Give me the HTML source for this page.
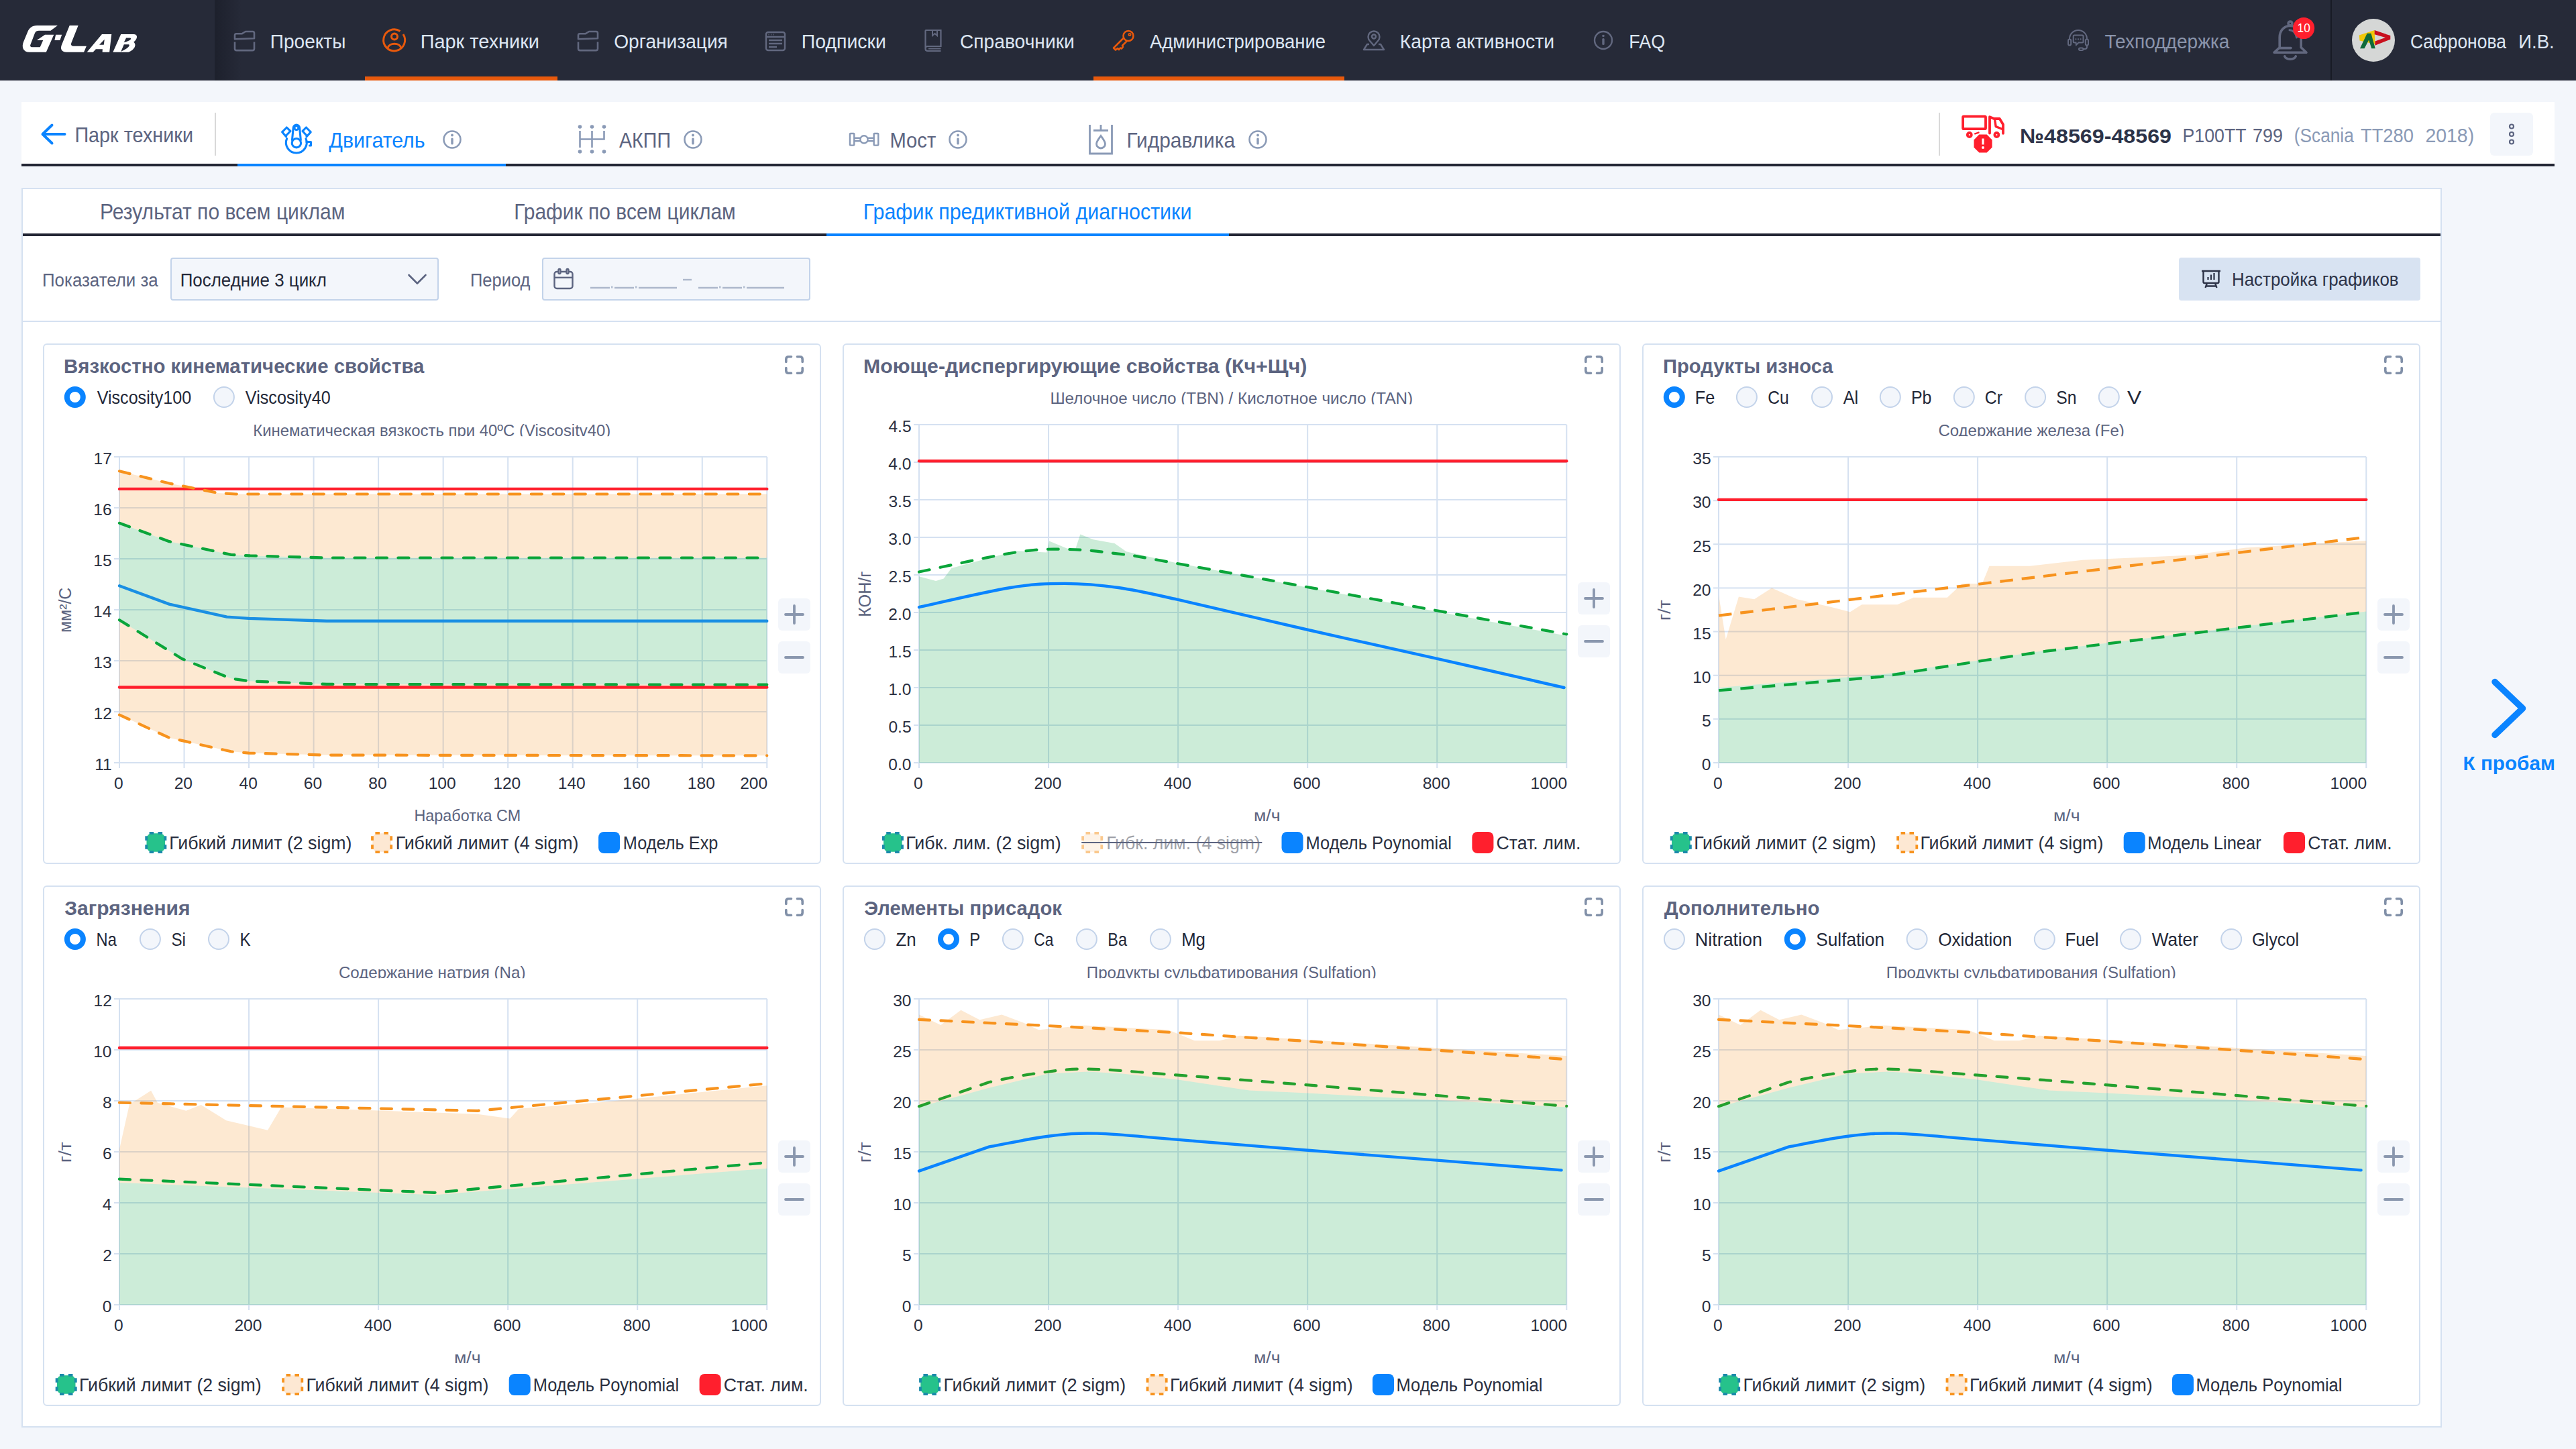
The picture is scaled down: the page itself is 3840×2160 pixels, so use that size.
<!DOCTYPE html>
<html><head><meta charset="utf-8"><title>G-LAB</title>
<style>
html,body{margin:0;padding:0;}
html{overflow:hidden;}
@media (max-width:1921px){body{transform:scale(0.5);transform-origin:0 0;}}
@media (min-width:1922px) and (max-width:2561px){body{transform:scale(0.666667);transform-origin:0 0;}}
@media (max-width:1281px){body{transform:scale(0.333333);transform-origin:0 0;}}
body{width:3840px;height:2160px;background:#f3f6fb;position:relative;overflow:hidden;font-family:"Liberation Sans",sans-serif;}
.b{position:absolute;}
svg.ov{position:absolute;left:0;top:0;}
</style></head><body>
<div class="b" style="left:0px;top:0px;width:3840px;height:120px;background:#262a38;"></div><div class="b" style="left:320px;top:0px;width:40px;height:120px;background:linear-gradient(to right,rgba(10,12,20,0.32),rgba(10,12,20,0));"></div><div class="b" style="left:544px;top:114px;width:287px;height:6px;background:#e8590c;"></div><div class="b" style="left:1630px;top:114px;width:374px;height:6px;background:#e8590c;"></div><div class="b" style="left:3474px;top:0px;width:2px;height:120px;background:#181b25;"></div><div class="b" style="left:32px;top:152px;width:3776px;height:92px;background:#ffffff;"></div><div class="b" style="left:32px;top:244px;width:3776px;height:4px;background:#232634;"></div><div class="b" style="left:354px;top:244px;width:400px;height:4px;background:#0a84ff;"></div><div class="b" style="left:320px;top:168px;width:2px;height:64px;background:#d9d9d9;"></div><div class="b" style="left:2890px;top:168px;width:2px;height:64px;background:#d9d9d9;"></div><div class="b" style="left:3712px;top:168px;width:64px;height:64px;background:#f3f6fb;border-radius:6px;"></div><div class="b" style="left:32px;top:280px;width:3608px;height:1848px;background:#ffffff;border:2px solid #d5e1f1;box-sizing:border-box;"></div><div class="b" style="left:34px;top:348px;width:3604px;height:4px;background:#232634;"></div><div class="b" style="left:1232px;top:348px;width:600px;height:4px;background:#0a84ff;"></div><div class="b" style="left:34px;top:478px;width:3604px;height:2px;background:#d5e1f1;"></div><div class="b" style="left:254px;top:384px;width:400px;height:64px;background:#f3f6fb;border:2px solid #c3d3ea;box-sizing:border-box;border-radius:4px;"></div><div class="b" style="left:808px;top:384px;width:400px;height:64px;background:#f3f6fb;border:2px solid #c3d3ea;box-sizing:border-box;border-radius:4px;"></div><div class="b" style="left:3248px;top:384px;width:360px;height:64px;background:#d8e3f2;border-radius:4px;"></div><div class="b" style="left:64px;top:512px;width:1160px;height:776px;background:#ffffff;border:2px solid #d5e1f1;box-sizing:border-box;border-radius:6px;"></div><div class="b" style="left:1160px;top:892px;width:48px;height:48px;background:#f3f6fb;border-radius:6px;"></div><div class="b" style="left:1160px;top:956px;width:48px;height:48px;background:#f3f6fb;border-radius:6px;"></div><div class="b" style="left:1256px;top:512px;width:1160px;height:776px;background:#ffffff;border:2px solid #d5e1f1;box-sizing:border-box;border-radius:6px;"></div><div class="b" style="left:2352px;top:868px;width:48px;height:48px;background:#f3f6fb;border-radius:6px;"></div><div class="b" style="left:2352px;top:932px;width:48px;height:48px;background:#f3f6fb;border-radius:6px;"></div><div class="b" style="left:2448px;top:512px;width:1160px;height:776px;background:#ffffff;border:2px solid #d5e1f1;box-sizing:border-box;border-radius:6px;"></div><div class="b" style="left:3544px;top:892px;width:48px;height:48px;background:#f3f6fb;border-radius:6px;"></div><div class="b" style="left:3544px;top:956px;width:48px;height:48px;background:#f3f6fb;border-radius:6px;"></div><div class="b" style="left:64px;top:1320px;width:1160px;height:776px;background:#ffffff;border:2px solid #d5e1f1;box-sizing:border-box;border-radius:6px;"></div><div class="b" style="left:1160px;top:1700px;width:48px;height:48px;background:#f3f6fb;border-radius:6px;"></div><div class="b" style="left:1160px;top:1764px;width:48px;height:48px;background:#f3f6fb;border-radius:6px;"></div><div class="b" style="left:1256px;top:1320px;width:1160px;height:776px;background:#ffffff;border:2px solid #d5e1f1;box-sizing:border-box;border-radius:6px;"></div><div class="b" style="left:2352px;top:1700px;width:48px;height:48px;background:#f3f6fb;border-radius:6px;"></div><div class="b" style="left:2352px;top:1764px;width:48px;height:48px;background:#f3f6fb;border-radius:6px;"></div><div class="b" style="left:2448px;top:1320px;width:1160px;height:776px;background:#ffffff;border:2px solid #d5e1f1;box-sizing:border-box;border-radius:6px;"></div><div class="b" style="left:3544px;top:1700px;width:48px;height:48px;background:#f3f6fb;border-radius:6px;"></div><div class="b" style="left:3544px;top:1764px;width:48px;height:48px;background:#f3f6fb;border-radius:6px;"></div>
<svg class="ov" width="3840" height="2160" viewBox="0 0 3840 2160" font-family="Liberation Sans, sans-serif">
<g fill="#ffffff"><path d="M85.90,38.04 L55.16,38.04 C47.47,38.04 43.63,42.23 41.53,46.77 L34.89,62.84 C32.10,69.83 34.19,77.87 43.98,77.87 L68.78,77.87 L80.31,51.66 L67.04,51.66 L54.81,60.05 L64.24,60.05 L59.70,70.18 L47.47,70.18 C45.02,70.18 44.68,68.09 45.51,66.34 L52.01,49.22 C53.41,46.42 55.16,45.72 57.95,45.72 L75.42,45.72 Z"/><path d="M83.11,51.66 L92.19,51.66 L89.40,60.05 L81.36,60.05 Z"/><path d="M103.72,38.04 L116.65,38.04 L106.52,63.54 C105.12,67.04 106.52,68.78 110.36,68.78 L128.88,68.78 L125.04,77.87 L99.18,77.87 C91.50,77.87 89.40,72.63 92.19,66.34 Z"/><path fill-rule="evenodd" d="M129.58,77.87 L151.94,50.96 L166.27,50.96 L163.12,77.87 L152.64,77.87 L152.85,73.33 L142.86,73.33 L138.67,77.87 Z M148.10,66.69 L155.79,58.65 L154.74,66.69 Z"/><path fill-rule="evenodd" d="M168.36,77.87 L180.24,50.96 L199.11,50.96 C206.10,50.96 205.40,57.95 199.11,62.84 C203.31,65.64 202.61,73.33 191.43,77.87 Z M184.79,63.19 L188.07,56.55 L193.52,56.55 C197.02,56.90 195.62,60.75 184.79,63.19 Z M180.24,76.96 L184.79,66.34 L191.43,66.34 C194.22,66.69 193.52,71.23 180.24,76.96 Z"/></g>
<g fill="none" stroke="#62687f" stroke-width="2.6" stroke-linejoin="round"><path d="M350 58.3 V52.5 q0-2.2 2.2-2.2 H360.5 L366 47 H376.8 q2.2 0 2.2 2.2 V57.3 Z"/><path d="M350 62.5 V72.5 q0 2.6 2.6 2.6 H376.4 q2.6 0 2.6 -2.6 V62.5"/></g>
<g fill="none" stroke="#62687f" stroke-width="2.6" stroke-linejoin="round"><path d="M862 58.3 V52.5 q0-2.2 2.2-2.2 H872.5 L878 47 H888.8 q2.2 0 2.2 2.2 V57.3 Z"/><path d="M862 62.5 V72.5 q0 2.6 2.6 2.6 H888.4 q2.6 0 2.6 -2.6 V62.5"/></g>
<g fill="none" stroke="#e8590c" stroke-width="3"><path d="M596.5 46.5 A16 16 0 1 0 601 51"/><circle cx="588" cy="54.5" r="4.5"/><path d="M578 71.5 C580 63 596 63 598 71.5"/></g>
<g fill="none" stroke="#62687f" stroke-width="2.4"><rect x="1142" y="48" width="28" height="27" rx="3"/><path d="M1142 55 H1170 M1146 60 H1166 M1146 65 H1166 M1146 70 H1158"/><path d="M1145.5 51.5 h1 M1149 51.5 h1 M1152.5 51.5 h1" stroke-width="1.8"/></g>
<g fill="none" stroke="#62687f" stroke-width="2.4"><path d="M1379.5 72.5 V46 q0-1 1-1 H1402.5 V69 H1383 q-3.5 0 -3.5 3.5 q0 3.5 3.5 3.5 H1402.5 M1384 72.5 H1402.5" stroke-width="2.2"/><path d="M1390 45 V53 L1393.5 50 L1397 53 V45" stroke-width="2"/></g>
<g fill="none" stroke="#e8590c" stroke-width="2.6" stroke-linejoin="round"><path d="M1675.5 56 L1660 71.5 L1663 74.5 L1666 72 L1668 74 L1670 71.5 L1672 72.5 L1674 70 L1673 68 L1680 61"/><circle cx="1682" cy="53.5" r="7.5"/><circle cx="1684" cy="51.5" r="1.6" stroke-width="1.8"/></g>
<g fill="none" stroke="#62687f" stroke-width="2.4" stroke-linejoin="round"><path d="M2048 68 L2042 61 A8.5 8.5 0 1 1 2054 61 Z"/><circle cx="2048" cy="54.5" r="3"/><path d="M2041 66 H2038 L2033 74 H2063 L2058 66 H2055"/></g>
<g fill="none" stroke="#62687f" stroke-width="2.4"><circle cx="2390" cy="60" r="13"/></g><circle cx="2390" cy="53.5" r="1.8" fill="#62687f"/><rect x="2388.3" y="57" width="3.4" height="10" rx="1.5" fill="#62687f"/>
<g fill="none" stroke="#62687f" stroke-width="2"><path d="M3085 58 A13 13 0 0 1 3111 58"/><rect x="3083" y="58.5" width="4.2" height="9" rx="2.1"/><rect x="3108.8" y="58.5" width="4.2" height="9" rx="2.1"/><path d="M3111 67.5 V70 q0 3 -3 3 H3105"/><rect x="3099" y="71.5" width="6.5" height="3.4" rx="1.7"/><path d="M3092.2 52.5 H3104 q1.5 0 1.5 1.5 V62 q0 1.5 -1.5 1.5 H3098.5 L3095 67 L3094.5 63.5 H3092.2 q-1.5 0 -1.5 -1.5 V54 q0 -1.5 1.5 -1.5 Z"/></g><g fill="#62687f"><circle cx="3094.4" cy="58.3" r="1.1"/><circle cx="3098" cy="58.3" r="1.1"/><circle cx="3101.6" cy="58.3" r="1.1"/></g>
<g fill="none" stroke="#62687f" stroke-width="3.6" stroke-linecap="round" stroke-linejoin="round"><circle cx="3414" cy="34.9" r="2.9"/><path d="M3398.2 70.8 V56 C3398.2 45.5 3405 38.5 3414 38.5 C3423 38.5 3430.2 45.5 3430.2 56 V70.8 L3438 78.3 H3390 Z"/><path d="M3398.5 71.6 H3415"/><path d="M3413 44.8 C3418 45 3422 49 3423.6 55.9" stroke-width="3"/><path d="M3405.7 83.8 C3408 89.5 3420 89.5 3422.3 83.8"/></g><circle cx="3434.1" cy="42" r="16.1" fill="#ff1f2d"/>
<text x="3424.50" y="47.90" font-size="18.8" fill="#ffffff" textLength="19.35" lengthAdjust="spacingAndGlyphs">10</text>
<circle cx="3538" cy="60" r="32" fill="#d5d7d6"/><path d="M3516.8 52.5 L3539.7 45.1 L3540.4 66 L3517.5 60.4 Z" fill="#f0c808"/><path d="M3518 72.3 L3528.6 49.8 L3534.5 49.8 L3540.8 72.3 L3535.2 72.3 L3531.2 59.4 L3524.6 72.3 Z" fill="#0f6b3a"/><path d="M3539.7 45.1 L3563.3 53.1 L3563.3 58.7 L3540.4 67.8 L3540.4 61.6 L3555.9 56 L3539.7 51.3 Z" fill="#c8101e"/>
<text x="402.75" y="72.00" font-size="30" fill="#dde6f3" textLength="112.65" lengthAdjust="spacingAndGlyphs">Проекты</text>
<text x="626.69" y="72.00" font-size="30" fill="#dde6f3" textLength="177.32" lengthAdjust="spacingAndGlyphs">Парк техники</text>
<text x="915.23" y="72.00" font-size="30" fill="#dde6f3" textLength="169.63" lengthAdjust="spacingAndGlyphs">Организация</text>
<text x="1194.72" y="72.00" font-size="30" fill="#dde6f3" textLength="126.20" lengthAdjust="spacingAndGlyphs">Подписки</text>
<text x="1430.99" y="72.00" font-size="30" fill="#dde6f3" textLength="170.73" lengthAdjust="spacingAndGlyphs">Справочники</text>
<text x="1714.00" y="72.00" font-size="30" fill="#dde6f3" textLength="262.06" lengthAdjust="spacingAndGlyphs">Администрирование</text>
<text x="2086.73" y="72.00" font-size="30" fill="#dde6f3" textLength="230.35" lengthAdjust="spacingAndGlyphs">Карта активности</text>
<text x="2428.25" y="72.00" font-size="30" fill="#dde6f3" textLength="53.88" lengthAdjust="spacingAndGlyphs">FAQ</text>
<text x="3137.44" y="72.00" font-size="30" fill="#8a94ab" textLength="185.96" lengthAdjust="spacingAndGlyphs">Техподдержка</text>
<text x="3592.88" y="72.00" font-size="30" fill="#dde6f3" textLength="143.00" lengthAdjust="spacingAndGlyphs">Сафронова</text>
<text x="3754.30" y="72.00" font-size="30" fill="#dde6f3" textLength="53.42" lengthAdjust="spacingAndGlyphs">И.В.</text>
<g fill="none" stroke="#5c6480" stroke-width="2.2"><circle cx="3744" cy="188.5" r="3"/><circle cx="3744" cy="200" r="3"/><circle cx="3744" cy="211.5" r="3"/></g>
<path d="M96.5 200 H64.5 M77.5 186.5 L63.5 200 L77.5 213.5" fill="none" stroke="#0a84ff" stroke-width="4" stroke-linecap="round" stroke-linejoin="round"/>
<text x="111.40" y="212.30" font-size="30.5" fill="#5c6480" textLength="176.60" lengthAdjust="spacingAndGlyphs">Парк техники</text>
<g fill="none" stroke="#0a84ff" stroke-width="3.1" stroke-linejoin="round" stroke-linecap="round"><path d="M427.61 206.58 A15.4 15.4 0 1 0 455.98 206.58"/><path d="M426.57 203.68 L420.56 196.85 L427.40 190.01 L432.99 195.40 L426.57 202.03"/><path d="M457.02 203.68 L463.23 196.85 L456.40 190.01 L451.01 195.40 L457.02 202.03"/><path d="M437.22 190.43 A4.7 4.7 0 0 1 446.58 190.43 M437.22 190.43 L435.48 208.65 M446.58 190.43 L448.32 208.65"/><circle cx="441.90" cy="213.21" r="6.7"/><circle cx="441.90" cy="190.63" r="3.0"/><path d="M456.81 211.55 L463.44 211.55 L463.44 216.94 L461.57 216.94"/></g>
<text x="490.35" y="220.30" font-size="32" fill="#0a84ff" textLength="143.27" lengthAdjust="spacingAndGlyphs">Двигатель</text>
<circle cx="674" cy="208" r="12.5" fill="none" stroke="#8a9ab6" stroke-width="2.5"/><circle cx="674" cy="201.5" r="1.9" fill="#8a9ab6"/><rect x="672.3" y="205.5" width="3.4" height="10" rx="1.6" fill="#8a9ab6"/>
<g fill="#8a9ab6"><circle cx="864.5" cy="189" r="2.8"/><circle cx="882.5" cy="189" r="2.8"/><circle cx="900.5" cy="189" r="2.8"/><circle cx="864.5" cy="226" r="2.8"/><circle cx="882.5" cy="226" r="2.8"/><circle cx="900.5" cy="226" r="2.8"/></g><path d="M864.5 195 V220 M882.5 195 V220 M900.5 195 V207.5 H864.5" fill="none" stroke="#8a9ab6" stroke-width="2.6"/>
<text x="923.00" y="220.30" font-size="32" fill="#5c6480" textLength="77.01" lengthAdjust="spacingAndGlyphs">АКПП</text>
<circle cx="1033" cy="208" r="12.5" fill="none" stroke="#8a9ab6" stroke-width="2.5"/><circle cx="1033" cy="201.5" r="1.9" fill="#8a9ab6"/><rect x="1031.3" y="205.5" width="3.4" height="10" rx="1.6" fill="#8a9ab6"/>
<g fill="none" stroke="#8a9ab6" stroke-width="2.4" stroke-linejoin="round"><rect x="1267" y="199" width="6.3" height="17.6" rx="0.8"/><rect x="1302.7" y="199" width="6.6" height="17.6" rx="0.8"/><circle cx="1288" cy="207.9" r="5.6"/><path d="M1273.3 205.7 H1282.6 M1273.3 210.3 H1282.6 M1293.4 205.7 H1302.7 M1293.4 210.3 H1302.7"/></g>
<text x="1326.46" y="220.30" font-size="32" fill="#5c6480" textLength="68.88" lengthAdjust="spacingAndGlyphs">Мост</text>
<circle cx="1428" cy="208" r="12.5" fill="none" stroke="#8a9ab6" stroke-width="2.5"/><circle cx="1428" cy="201.5" r="1.9" fill="#8a9ab6"/><rect x="1426.3" y="205.5" width="3.4" height="10" rx="1.6" fill="#8a9ab6"/>
<g fill="none" stroke="#8a9ab6" stroke-width="2.8"><path d="M1624.5 186 V229 H1657.5 V186"/><path d="M1630 194.5 H1652 M1641 186 V194.5"/><path d="M1641 202.5 C1637 208 1634.5 211 1634.5 214.5 A6.5 6.5 0 0 0 1647.5 214.5 C1647.5 211 1645 208 1641 202.5 Z"/></g>
<text x="1679.61" y="220.30" font-size="32" fill="#5c6480" textLength="161.41" lengthAdjust="spacingAndGlyphs">Гидравлика</text>
<circle cx="1875" cy="208" r="12.5" fill="none" stroke="#8a9ab6" stroke-width="2.5"/><circle cx="1875" cy="201.5" r="1.9" fill="#8a9ab6"/><rect x="1873.3" y="205.5" width="3.4" height="10" rx="1.6" fill="#8a9ab6"/>
<g fill="none" stroke="#ff1f2d" stroke-width="3.8" stroke-linejoin="round" stroke-linecap="round"><rect x="2926.1" y="173.7" width="33.9" height="18.4" rx="1.2"/><path d="M2966 198.5 V174.2 L2972.5 177 H2980.8 L2986 185.5 V198.8"/><path d="M2973.8 179.8 L2975.2 188.7 L2984.8 192.5" stroke-width="3.4"/><circle cx="2935.8" cy="201" r="3"/><circle cx="2976.4" cy="201" r="3"/><path d="M2944.2 199.3 L2949.5 197.6" stroke-width="2.4"/></g><path d="M2950.3 200.5 H2961.7 L2969.6 208.4 V219.7 L2961.7 227.6 H2950.3 L2942.5 219.7 V208.4 Z" fill="#ff1f2d"/><rect x="2954.4" y="206.5" width="3.2" height="9" fill="#fff"/><circle cx="2956" cy="220.1" r="2" fill="#fff"/>
<text x="3011.11" y="212.50" font-size="30" font-weight="bold" fill="#2d3348" textLength="225.91" lengthAdjust="spacingAndGlyphs">№48569-48569</text>
<text x="3253.56" y="212.30" font-size="30" fill="#5c6480" textLength="95.03" lengthAdjust="spacingAndGlyphs">Р100ТТ</text>
<text x="3357.95" y="212.30" font-size="30" fill="#5c6480" textLength="44.95" lengthAdjust="spacingAndGlyphs">799</text>
<text x="3419.72" y="212.30" font-size="30" fill="#8a9ab6" textLength="89.10" lengthAdjust="spacingAndGlyphs">(Scania</text>
<text x="3518.95" y="212.30" font-size="30" fill="#8a9ab6" textLength="79.11" lengthAdjust="spacingAndGlyphs">TT280</text>
<text x="3615.38" y="212.30" font-size="30" fill="#8a9ab6" textLength="72.81" lengthAdjust="spacingAndGlyphs">2018)</text>
<text x="148.99" y="326.60" font-size="32.5" fill="#5c6480" textLength="365.36" lengthAdjust="spacingAndGlyphs">Результат по всем циклам</text>
<text x="766.20" y="326.60" font-size="32.5" fill="#5c6480" textLength="330.56" lengthAdjust="spacingAndGlyphs">График по всем циклам</text>
<text x="1286.77" y="326.60" font-size="32.5" fill="#0a84ff" textLength="489.63" lengthAdjust="spacingAndGlyphs">График предиктивной диагностики</text>
<text x="63.03" y="426.60" font-size="27.7" fill="#5c6480" textLength="172.71" lengthAdjust="spacingAndGlyphs">Показатели за</text>
<text x="268.73" y="426.60" font-size="27.7" fill="#232838" textLength="218.15" lengthAdjust="spacingAndGlyphs">Последние 3 цикл</text>
<path d="M609.5 410 L622 422.5 L634.5 410" fill="none" stroke="#5c6480" stroke-width="2.6" stroke-linejoin="round" stroke-linecap="round"/>
<text x="700.96" y="426.60" font-size="27.7" fill="#5c6480" textLength="89.49" lengthAdjust="spacingAndGlyphs">Период</text>
<g fill="none" stroke="#5c6480" stroke-width="2.4"><rect x="826.5" y="405" width="27" height="25" rx="3.5"/><path d="M826.5 413.8 H853.5"/><rect x="832.5" y="401" width="3" height="7" rx="1.5" fill="#f3f6fb"/><rect x="844.5" y="401" width="3" height="7" rx="1.5" fill="#f3f6fb"/></g>
<g fill="none" stroke="#adb8cb" stroke-width="2.4"><path d="M880 429 H909 M916 429 H945 M952 429 H1009 M1041 429 H1070 M1077 429 H1106 M1113 429 H1169"/><path d="M1018 417 H1031"/></g><g fill="#b4bfd2"><rect x="911" y="426.5" width="2.5" height="3"/><rect x="947" y="426.5" width="2.5" height="3"/><rect x="1072" y="426.5" width="2.5" height="3"/><rect x="1108" y="426.5" width="2.5" height="3"/></g>
<g fill="none" stroke="#2d3348" stroke-width="2.4"><path d="M3282 404 H3310 M3284.5 404 V420 q0 2 2 2 H3305.5 q2 0 2 -2 V404 M3290 422 L3287.5 429 M3302 422 L3304.5 429 M3288.5 426.5 H3303.5"/><path d="M3291.5 417 V413 M3296 417 V409.5 M3300.5 417 V407" stroke-width="2.2"/></g>
<text x="3326.93" y="426.40" font-size="28.5" fill="#2d3348" textLength="248.72" lengthAdjust="spacingAndGlyphs">Настройка графиков</text>
<path d="M3719 1016.5 L3760.5 1056 L3719 1095.5" fill="none" stroke="#0a84ff" stroke-width="9.5" stroke-linecap="round" stroke-linejoin="round"/>
<text x="3671.57" y="1148.00" font-size="29.5" font-weight="bold" fill="#0a84ff" textLength="137.33" lengthAdjust="spacingAndGlyphs">К пробам</text>
<text x="95.09" y="556.10" font-size="28.7" font-weight="bold" fill="#5c6480" textLength="537.37" lengthAdjust="spacingAndGlyphs">Вязкостно кинематические свойства</text>
<g transform="translate(1170,530)" fill="none" stroke="#8190a8" stroke-width="3.6" stroke-linecap="round"><path d="M1.8 9.5 V5.5 Q1.8 1.8 5.5 1.8 H9.5 M18.5 1.8 H22.5 Q26.2 1.8 26.2 5.5 V9.5 M1.8 18.5 V22.5 Q1.8 26.2 5.5 26.2 H9.5 M18.5 26.2 H22.5 Q26.2 26.2 26.2 22.5 V18.5"/></g>
<circle cx="111.8" cy="592" r="12" fill="#fff" stroke="#0a84ff" stroke-width="8"/>
<text x="144.67" y="602.10" font-size="27.7" fill="#232838" textLength="140.53" lengthAdjust="spacingAndGlyphs">Viscosity100</text>
<circle cx="333.9" cy="592" r="15" fill="#f3f6fb" stroke="#c3d3ea" stroke-width="2"/>
<text x="365.87" y="602.10" font-size="27.7" fill="#232838" textLength="126.80" lengthAdjust="spacingAndGlyphs">Viscosity40</text>
<clipPath id="ct1"><rect x="64" y="623" width="1160" height="27.3"/></clipPath>
<g clip-path="url(#ct1)">
<text x="377.29" y="649.90" font-size="24.4" fill="#5c6480" textLength="533.05" lengthAdjust="spacingAndGlyphs">Кинематическая вязкость при 40ºС (Viscositv40)</text>
</g>
<path d="M170 1137.00 H1143.30 M170 1061.00 H1143.30 M170 985.00 H1143.30 M170 909.00 H1143.30 M170 833.00 H1143.30 M170 757.00 H1143.30 M170 681.00 H1143.30 M178.00 681 V1145 M274.53 681 V1145 M371.06 681 V1145 M467.59 681 V1145 M564.12 681 V1145 M660.65 681 V1145 M757.18 681 V1145 M853.71 681 V1145 M950.24 681 V1145 M1046.77 681 V1145 M1143.30 681 V1145" stroke="#d5e1f1" stroke-width="2" fill="none"/>
<text x="141.25" y="1148.30" font-size="24.6" fill="#2a2f40" textLength="25.54" lengthAdjust="spacingAndGlyphs">11</text>
<text x="139.52" y="1072.30" font-size="24.6" fill="#2a2f40" textLength="27.36" lengthAdjust="spacingAndGlyphs">12</text>
<text x="139.28" y="996.30" font-size="24.6" fill="#2a2f40" textLength="27.36" lengthAdjust="spacingAndGlyphs">13</text>
<text x="139.03" y="920.30" font-size="24.6" fill="#2a2f40" textLength="27.36" lengthAdjust="spacingAndGlyphs">14</text>
<text x="139.28" y="844.30" font-size="24.6" fill="#2a2f40" textLength="27.36" lengthAdjust="spacingAndGlyphs">15</text>
<text x="139.28" y="768.30" font-size="24.6" fill="#2a2f40" textLength="27.36" lengthAdjust="spacingAndGlyphs">16</text>
<text x="139.52" y="692.30" font-size="24.6" fill="#2a2f40" textLength="27.36" lengthAdjust="spacingAndGlyphs">17</text>
<text x="170.11" y="1176.30" font-size="24.6" fill="#2a2f40" textLength="13.68" lengthAdjust="spacingAndGlyphs">0</text>
<text x="259.69" y="1176.30" font-size="24.6" fill="#2a2f40" textLength="27.36" lengthAdjust="spacingAndGlyphs">20</text>
<text x="356.59" y="1176.30" font-size="24.6" fill="#2a2f40" textLength="27.36" lengthAdjust="spacingAndGlyphs">40</text>
<text x="452.75" y="1176.30" font-size="24.6" fill="#2a2f40" textLength="27.36" lengthAdjust="spacingAndGlyphs">60</text>
<text x="549.34" y="1176.30" font-size="24.6" fill="#2a2f40" textLength="27.36" lengthAdjust="spacingAndGlyphs">80</text>
<text x="638.68" y="1176.30" font-size="24.6" fill="#2a2f40" textLength="41.05" lengthAdjust="spacingAndGlyphs">100</text>
<text x="735.21" y="1176.30" font-size="24.6" fill="#2a2f40" textLength="41.05" lengthAdjust="spacingAndGlyphs">120</text>
<text x="831.74" y="1176.30" font-size="24.6" fill="#2a2f40" textLength="41.05" lengthAdjust="spacingAndGlyphs">140</text>
<text x="928.27" y="1176.30" font-size="24.6" fill="#2a2f40" textLength="41.05" lengthAdjust="spacingAndGlyphs">160</text>
<text x="1024.80" y="1176.30" font-size="24.6" fill="#2a2f40" textLength="41.05" lengthAdjust="spacingAndGlyphs">180</text>
<text x="1103.20" y="1176.30" font-size="24.6" fill="#2a2f40" textLength="41.05" lengthAdjust="spacingAndGlyphs">200</text>
<text x="617.48" y="1224.20" font-size="24.4" fill="#5c6480" textLength="158.71" lengthAdjust="spacingAndGlyphs">Наработка СМ</text>
<g transform="translate(106,909.00) rotate(-90)">
<text x="-34.09" y="0.00" font-size="25.5" fill="#5c6480" textLength="67.39" lengthAdjust="spacingAndGlyphs">мм²/С</text>
</g>
<path d="M1171 916.00 H1197 M1184 903.00 V929.00 M1171 980.00 H1197" stroke="#8a97ae" stroke-width="3.8" stroke-linecap="round" fill="none"/>
<rect x="218.5" y="1242.2" width="27.6" height="27.6" rx="8" fill="#26c28b"/><g fill="#1a8aaa"><rect x="222.6" y="1240.0" width="6.6" height="3.8"/><rect x="222.6" y="1268.2" width="6.6" height="3.8"/><rect x="216.3" y="1246.3" width="3.8" height="6.6"/><rect x="244.5" y="1246.3" width="3.8" height="6.6"/><rect x="235.5" y="1240.0" width="6.6" height="3.8"/><rect x="235.5" y="1268.2" width="6.6" height="3.8"/><rect x="216.3" y="1259.2" width="3.8" height="6.6"/><rect x="244.5" y="1259.2" width="3.8" height="6.6"/></g>
<text x="252.26" y="1265.70" font-size="27" fill="#2a2f40" textLength="272.17" lengthAdjust="spacingAndGlyphs">Гибкий лимит (2 sigm)</text>
<g><rect x="555.3000000000001" y="1242.2" width="27.6" height="27.6" rx="8" fill="#fde8d3"/><g fill="#f7931e"><rect x="559.4" y="1240.0" width="6.6" height="3.8"/><rect x="559.4" y="1268.2" width="6.6" height="3.8"/><rect x="553.1" y="1246.3" width="3.8" height="6.6"/><rect x="581.3" y="1246.3" width="3.8" height="6.6"/><rect x="572.3" y="1240.0" width="6.6" height="3.8"/><rect x="572.3" y="1268.2" width="6.6" height="3.8"/><rect x="553.1" y="1259.2" width="3.8" height="6.6"/><rect x="581.3" y="1259.2" width="3.8" height="6.6"/></g></g>
<text x="589.66" y="1265.70" font-size="27" fill="#2a2f40" textLength="272.78" lengthAdjust="spacingAndGlyphs">Гибкий лимит (4 sigm)</text>
<rect x="892.1" y="1240" width="32" height="32" rx="8" fill="#0a84ff"/>
<text x="928.77" y="1265.70" font-size="27" fill="#2a2f40" textLength="141.65" lengthAdjust="spacingAndGlyphs">Модель Exp</text>
<path d="M178.00 702.28 L252.33 720.52 L325.21 734.96 L351.75 736.48 L1143.30 736.48 L1143.30 831.48 L486.90 831.48 L372.99 828.44 L344.51 826.92 L252.33 807.16 L178.00 779.80 Z" fill="#f7931e" fill-opacity="0.2"/>
<path d="M178.00 924.20 L271.15 981.96 L344.51 1011.60 L372.99 1015.40 L486.90 1019.96 L1143.30 1020.72 L1143.30 1126.36 L486.90 1125.60 L371.06 1122.56 L344.51 1120.28 L252.33 1099.76 L178.00 1065.56 Z" fill="#f7931e" fill-opacity="0.2"/>
<path d="M178.00 779.80 L252.33 807.16 L344.51 826.92 L372.99 828.44 L486.90 831.48 L1143.30 831.48 L1143.30 1020.72 L486.90 1019.96 L372.99 1015.40 L344.51 1011.60 L271.15 981.96 L178.00 924.20 Z" fill="#00a03c" fill-opacity="0.2"/>
<path d="M178.00 728.88 L1143.30 728.88" fill="none" stroke="#ff1f2d" stroke-width="4.4" stroke-linecap="round" stroke-linejoin="round"/>
<path d="M178.00 1024.52 L1143.30 1024.52" fill="none" stroke="#ff1f2d" stroke-width="4.4" stroke-linecap="round" stroke-linejoin="round"/>
<path d="M178.00 702.28 L252.33 720.52 L325.21 734.96 L351.75 736.48 L1143.30 736.48" fill="none" stroke="#f7931e" stroke-width="4.2" stroke-linecap="round" stroke-linejoin="round" stroke-dasharray="16 16.5"/>
<path d="M178.00 779.80 L252.33 807.16 L344.51 826.92 L372.99 828.44 L486.90 831.48 L1143.30 831.48" fill="none" stroke="#0aa53a" stroke-width="4.2" stroke-linecap="round" stroke-linejoin="round" stroke-dasharray="16 16.5"/>
<path d="M178.00 924.20 L271.15 981.96 L344.51 1011.60 L372.99 1015.40 L486.90 1019.96 L1143.30 1020.72" fill="none" stroke="#0aa53a" stroke-width="4.2" stroke-linecap="round" stroke-linejoin="round" stroke-dasharray="16 16.5"/>
<path d="M178.00 1065.56 L252.33 1099.76 L344.51 1120.28 L371.06 1122.56 L486.90 1125.60 L1143.30 1126.36" fill="none" stroke="#f7931e" stroke-width="4.2" stroke-linecap="round" stroke-linejoin="round" stroke-dasharray="16 16.5"/>
<path d="M178.00 873.28 L252.33 900.64 L338.24 919.64 L371.06 921.92 L486.90 925.72 L1143.30 925.72" fill="none" stroke="#1a8fe3" stroke-width="4.4" stroke-linecap="round" stroke-linejoin="round"/>
<text x="1287.03" y="556.10" font-size="28.7" font-weight="bold" fill="#5c6480" textLength="661.27" lengthAdjust="spacingAndGlyphs">Моюще-диспергирующие свойства (Кч+Щч)</text>
<g transform="translate(2362,530)" fill="none" stroke="#8190a8" stroke-width="3.6" stroke-linecap="round"><path d="M1.8 9.5 V5.5 Q1.8 1.8 5.5 1.8 H9.5 M18.5 1.8 H22.5 Q26.2 1.8 26.2 5.5 V9.5 M1.8 18.5 V22.5 Q1.8 26.2 5.5 26.2 H9.5 M18.5 26.2 H22.5 Q26.2 26.2 26.2 22.5 V18.5"/></g>
<clipPath id="ct2"><rect x="1256" y="575.2" width="1160" height="27.3"/></clipPath>
<g clip-path="url(#ct2)">
<text x="1565.41" y="602.10" font-size="24.4" fill="#5c6480" textLength="540.71" lengthAdjust="spacingAndGlyphs">Шелочное число (TBN) / Кислотное число (TAN)</text>
</g>
<path d="M1362 1137.00 H2335.30 M1362 1081.00 H2335.30 M1362 1025.00 H2335.30 M1362 969.00 H2335.30 M1362 913.00 H2335.30 M1362 857.00 H2335.30 M1362 801.00 H2335.30 M1362 745.00 H2335.30 M1362 689.00 H2335.30 M1362 633.00 H2335.30 M1370.00 633 V1145 M1563.06 633 V1145 M1756.12 633 V1145 M1949.18 633 V1145 M2142.24 633 V1145 M2335.30 633 V1145" stroke="#d5e1f1" stroke-width="2" fill="none"/>
<text x="1324.27" y="1148.30" font-size="24.6" fill="#2a2f40" textLength="34.20" lengthAdjust="spacingAndGlyphs">0.0</text>
<text x="1324.39" y="1092.30" font-size="24.6" fill="#2a2f40" textLength="34.20" lengthAdjust="spacingAndGlyphs">0.5</text>
<text x="1324.27" y="1036.30" font-size="24.6" fill="#2a2f40" textLength="34.20" lengthAdjust="spacingAndGlyphs">1.0</text>
<text x="1324.39" y="980.30" font-size="24.6" fill="#2a2f40" textLength="34.20" lengthAdjust="spacingAndGlyphs">1.5</text>
<text x="1324.27" y="924.30" font-size="24.6" fill="#2a2f40" textLength="34.20" lengthAdjust="spacingAndGlyphs">2.0</text>
<text x="1324.39" y="868.30" font-size="24.6" fill="#2a2f40" textLength="34.20" lengthAdjust="spacingAndGlyphs">2.5</text>
<text x="1324.27" y="812.30" font-size="24.6" fill="#2a2f40" textLength="34.20" lengthAdjust="spacingAndGlyphs">3.0</text>
<text x="1324.39" y="756.30" font-size="24.6" fill="#2a2f40" textLength="34.20" lengthAdjust="spacingAndGlyphs">3.5</text>
<text x="1324.27" y="700.30" font-size="24.6" fill="#2a2f40" textLength="34.20" lengthAdjust="spacingAndGlyphs">4.0</text>
<text x="1324.39" y="644.30" font-size="24.6" fill="#2a2f40" textLength="34.20" lengthAdjust="spacingAndGlyphs">4.5</text>
<text x="1362.11" y="1176.30" font-size="24.6" fill="#2a2f40" textLength="13.68" lengthAdjust="spacingAndGlyphs">0</text>
<text x="1541.40" y="1176.30" font-size="24.6" fill="#2a2f40" textLength="41.05" lengthAdjust="spacingAndGlyphs">200</text>
<text x="1734.83" y="1176.30" font-size="24.6" fill="#2a2f40" textLength="41.05" lengthAdjust="spacingAndGlyphs">400</text>
<text x="1927.52" y="1176.30" font-size="24.6" fill="#2a2f40" textLength="41.05" lengthAdjust="spacingAndGlyphs">600</text>
<text x="2120.64" y="1176.30" font-size="24.6" fill="#2a2f40" textLength="41.05" lengthAdjust="spacingAndGlyphs">800</text>
<text x="2281.43" y="1176.30" font-size="24.6" fill="#2a2f40" textLength="54.73" lengthAdjust="spacingAndGlyphs">1000</text>
<text x="1868.98" y="1224.20" font-size="24.4" fill="#5c6480" textLength="39.67" lengthAdjust="spacingAndGlyphs">м/ч</text>
<g transform="translate(1298,885.00) rotate(-90)">
<text x="-34.87" y="0.00" font-size="25.5" fill="#5c6480" textLength="68.44" lengthAdjust="spacingAndGlyphs">КОН/г</text>
</g>
<path d="M2363 892.00 H2389 M2376 879.00 V905.00 M2363 956.00 H2389" stroke="#8a97ae" stroke-width="3.8" stroke-linecap="round" fill="none"/>
<rect x="1317.1000000000001" y="1242.2" width="27.6" height="27.6" rx="8" fill="#26c28b"/><g fill="#1a8aaa"><rect x="1321.2" y="1240.0" width="6.6" height="3.8"/><rect x="1321.2" y="1268.2" width="6.6" height="3.8"/><rect x="1314.9" y="1246.3" width="3.8" height="6.6"/><rect x="1343.1" y="1246.3" width="3.8" height="6.6"/><rect x="1334.1" y="1240.0" width="6.6" height="3.8"/><rect x="1334.1" y="1268.2" width="6.6" height="3.8"/><rect x="1314.9" y="1259.2" width="3.8" height="6.6"/><rect x="1343.1" y="1259.2" width="3.8" height="6.6"/></g>
<text x="1350.25" y="1265.70" font-size="27" fill="#2a2f40" textLength="231.40" lengthAdjust="spacingAndGlyphs">Гибк. лим. (2 sigm)</text>
<g opacity="0.5"><rect x="1614.4" y="1242.2" width="27.6" height="27.6" rx="8" fill="#fde8d3"/><g fill="#f7931e"><rect x="1618.5" y="1240.0" width="6.6" height="3.8"/><rect x="1618.5" y="1268.2" width="6.6" height="3.8"/><rect x="1612.2" y="1246.3" width="3.8" height="6.6"/><rect x="1640.4" y="1246.3" width="3.8" height="6.6"/><rect x="1631.4" y="1240.0" width="6.6" height="3.8"/><rect x="1631.4" y="1268.2" width="6.6" height="3.8"/><rect x="1612.2" y="1259.2" width="3.8" height="6.6"/><rect x="1640.4" y="1259.2" width="3.8" height="6.6"/></g></g>
<g opacity="0.45">
<text x="1649.16" y="1265.70" font-size="27" fill="#2a2f40" textLength="229.78" lengthAdjust="spacingAndGlyphs">Гибк. лим. (4 sigm)</text>
</g>
<path d="M1612.2 1256 H1881.3" stroke="#5c6480" stroke-width="2"/>
<rect x="1910.5" y="1240" width="32" height="32" rx="8" fill="#0a84ff"/>
<text x="1946.56" y="1265.70" font-size="27" fill="#2a2f40" textLength="217.43" lengthAdjust="spacingAndGlyphs">Модель Poynomial</text>
<rect x="2194.4" y="1240" width="32" height="32" rx="8" fill="#ff1f2d"/>
<text x="2230.56" y="1265.70" font-size="27" fill="#2a2f40" textLength="125.93" lengthAdjust="spacingAndGlyphs">Стат. лим.</text>
<path d="M1370.00 859.24 L1395.10 865.96 L1406.68 862.60 L1418.27 846.92 L1513.83 821.16 L1560.16 823.40 L1564.03 806.60 L1591.05 817.80 L1602.64 820.04 L1610.36 796.52 L1629.67 804.36 L1661.52 809.96 L1678.90 822.28 L1756.12 839.64 L2335.30 947.72 L2335.30 1137.00 L1370.00 1137.00 Z" fill="#00a03c" fill-opacity="0.2"/>
<path d="M1370.00 687.21 L2335.30 687.21" fill="none" stroke="#ff1f2d" stroke-width="4.4" stroke-linecap="round" stroke-linejoin="round"/>
<path d="M1370.00 852.52 C1393.97 847.67 1476.99 829.00 1513.83 823.40 C1550.67 817.80 1565.47 818.55 1591.05 818.92 C1616.63 819.29 1639.80 822.09 1667.31 825.64 C1694.82 829.19 1644.79 820.23 1756.12 840.20 C1867.45 860.17 2238.77 927.93 2335.30 945.48" fill="none" stroke="#0aa53a" stroke-width="4.2" stroke-linecap="round" stroke-linejoin="round" stroke-dasharray="16 16.5"/>
<path d="M1370.00 905.16 C1392.68 900.31 1469.91 881.92 1506.11 876.04 C1542.31 870.16 1560.32 869.88 1587.19 869.88 C1614.06 869.88 1639.16 872.03 1667.31 876.04 C1695.47 880.05 1709.14 883.51 1756.12 893.96 C1803.10 904.41 1884.83 924.11 1949.18 938.76 C2013.53 953.41 2078.53 967.51 2142.24 981.88 C2205.95 996.25 2299.91 1017.81 2331.44 1025.00" fill="none" stroke="#0a84ff" stroke-width="4.4" stroke-linecap="round" stroke-linejoin="round"/>
<text x="2479.10" y="556.10" font-size="28.7" font-weight="bold" fill="#5c6480" textLength="253.42" lengthAdjust="spacingAndGlyphs">Продукты износа</text>
<g transform="translate(3554,530)" fill="none" stroke="#8190a8" stroke-width="3.6" stroke-linecap="round"><path d="M1.8 9.5 V5.5 Q1.8 1.8 5.5 1.8 H9.5 M18.5 1.8 H22.5 Q26.2 1.8 26.2 5.5 V9.5 M1.8 18.5 V22.5 Q1.8 26.2 5.5 26.2 H9.5 M18.5 26.2 H22.5 Q26.2 26.2 26.2 22.5 V18.5"/></g>
<circle cx="2495.8" cy="592" r="12" fill="#fff" stroke="#0a84ff" stroke-width="8"/>
<text x="2526.78" y="602.10" font-size="27.7" fill="#232838" textLength="29.40" lengthAdjust="spacingAndGlyphs">Fe</text>
<circle cx="2603.9" cy="592" r="15" fill="#f3f6fb" stroke="#c3d3ea" stroke-width="2"/>
<text x="2635.27" y="602.10" font-size="27.7" fill="#232838" textLength="31.52" lengthAdjust="spacingAndGlyphs">Cu</text>
<circle cx="2716" cy="592" r="15" fill="#f3f6fb" stroke="#c3d3ea" stroke-width="2"/>
<text x="2747.70" y="602.10" font-size="27.7" fill="#232838" textLength="22.45" lengthAdjust="spacingAndGlyphs">Al</text>
<circle cx="2817.8" cy="592" r="15" fill="#f3f6fb" stroke="#c3d3ea" stroke-width="2"/>
<text x="2849.01" y="602.10" font-size="27.7" fill="#232838" textLength="30.47" lengthAdjust="spacingAndGlyphs">Pb</text>
<circle cx="2927.8" cy="592" r="15" fill="#f3f6fb" stroke="#c3d3ea" stroke-width="2"/>
<text x="2958.86" y="602.10" font-size="27.7" fill="#232838" textLength="26.25" lengthAdjust="spacingAndGlyphs">Cr</text>
<circle cx="3034.1" cy="592" r="15" fill="#f3f6fb" stroke="#c3d3ea" stroke-width="2"/>
<text x="3065.29" y="602.10" font-size="27.7" fill="#232838" textLength="30.19" lengthAdjust="spacingAndGlyphs">Sn</text>
<circle cx="3143.8" cy="592" r="15" fill="#f3f6fb" stroke="#c3d3ea" stroke-width="2"/>
<text x="3170.94" y="602.10" font-size="27.7" fill="#232838" textLength="21.08" lengthAdjust="spacingAndGlyphs">V</text>
<clipPath id="ct3"><rect x="2448" y="623" width="1160" height="27.3"/></clipPath>
<g clip-path="url(#ct3)">
<text x="2889.45" y="649.90" font-size="24.4" fill="#5c6480" textLength="277.40" lengthAdjust="spacingAndGlyphs">Содержание железа (Fe)</text>
</g>
<path d="M2554 1137.00 H3527.30 M2554 1071.86 H3527.30 M2554 1006.71 H3527.30 M2554 941.57 H3527.30 M2554 876.43 H3527.30 M2554 811.29 H3527.30 M2554 746.14 H3527.30 M2554 681.00 H3527.30 M2562.00 681 V1145 M2755.06 681 V1145 M2948.12 681 V1145 M3141.18 681 V1145 M3334.24 681 V1145 M3527.30 681 V1145" stroke="#d5e1f1" stroke-width="2" fill="none"/>
<text x="2536.81" y="1148.30" font-size="24.6" fill="#2a2f40" textLength="13.68" lengthAdjust="spacingAndGlyphs">0</text>
<text x="2536.93" y="1083.16" font-size="24.6" fill="#2a2f40" textLength="13.68" lengthAdjust="spacingAndGlyphs">5</text>
<text x="2523.16" y="1018.01" font-size="24.6" fill="#2a2f40" textLength="27.36" lengthAdjust="spacingAndGlyphs">10</text>
<text x="2523.28" y="952.87" font-size="24.6" fill="#2a2f40" textLength="27.36" lengthAdjust="spacingAndGlyphs">15</text>
<text x="2523.15" y="887.73" font-size="24.6" fill="#2a2f40" textLength="27.36" lengthAdjust="spacingAndGlyphs">20</text>
<text x="2523.28" y="822.59" font-size="24.6" fill="#2a2f40" textLength="27.36" lengthAdjust="spacingAndGlyphs">25</text>
<text x="2523.16" y="757.44" font-size="24.6" fill="#2a2f40" textLength="27.36" lengthAdjust="spacingAndGlyphs">30</text>
<text x="2523.28" y="692.30" font-size="24.6" fill="#2a2f40" textLength="27.36" lengthAdjust="spacingAndGlyphs">35</text>
<text x="2554.11" y="1176.30" font-size="24.6" fill="#2a2f40" textLength="13.68" lengthAdjust="spacingAndGlyphs">0</text>
<text x="2733.40" y="1176.30" font-size="24.6" fill="#2a2f40" textLength="41.05" lengthAdjust="spacingAndGlyphs">200</text>
<text x="2926.82" y="1176.30" font-size="24.6" fill="#2a2f40" textLength="41.05" lengthAdjust="spacingAndGlyphs">400</text>
<text x="3119.52" y="1176.30" font-size="24.6" fill="#2a2f40" textLength="41.05" lengthAdjust="spacingAndGlyphs">600</text>
<text x="3312.64" y="1176.30" font-size="24.6" fill="#2a2f40" textLength="41.05" lengthAdjust="spacingAndGlyphs">800</text>
<text x="3473.43" y="1176.30" font-size="24.6" fill="#2a2f40" textLength="54.73" lengthAdjust="spacingAndGlyphs">1000</text>
<text x="3060.98" y="1224.20" font-size="24.4" fill="#5c6480" textLength="39.67" lengthAdjust="spacingAndGlyphs">м/ч</text>
<g transform="translate(2490,909.00) rotate(-90)">
<text x="-16.27" y="0.00" font-size="25.5" fill="#5c6480" textLength="31.01" lengthAdjust="spacingAndGlyphs">г/т</text>
</g>
<path d="M3555 916.00 H3581 M3568 903.00 V929.00 M3555 980.00 H3581" stroke="#8a97ae" stroke-width="3.8" stroke-linecap="round" fill="none"/>
<rect x="2492.0" y="1242.2" width="27.6" height="27.6" rx="8" fill="#26c28b"/><g fill="#1a8aaa"><rect x="2496.1" y="1240.0" width="6.6" height="3.8"/><rect x="2496.1" y="1268.2" width="6.6" height="3.8"/><rect x="2489.8" y="1246.3" width="3.8" height="6.6"/><rect x="2518.0" y="1246.3" width="3.8" height="6.6"/><rect x="2509.0" y="1240.0" width="6.6" height="3.8"/><rect x="2509.0" y="1268.2" width="6.6" height="3.8"/><rect x="2489.8" y="1259.2" width="3.8" height="6.6"/><rect x="2518.0" y="1259.2" width="3.8" height="6.6"/></g>
<text x="2525.17" y="1265.70" font-size="27" fill="#2a2f40" textLength="271.56" lengthAdjust="spacingAndGlyphs">Гибкий лимит (2 sigm)</text>
<g><rect x="2829.3999999999996" y="1242.2" width="27.6" height="27.6" rx="8" fill="#fde8d3"/><g fill="#f7931e"><rect x="2833.5" y="1240.0" width="6.6" height="3.8"/><rect x="2833.5" y="1268.2" width="6.6" height="3.8"/><rect x="2827.2" y="1246.3" width="3.8" height="6.6"/><rect x="2855.4" y="1246.3" width="3.8" height="6.6"/><rect x="2846.4" y="1240.0" width="6.6" height="3.8"/><rect x="2846.4" y="1268.2" width="6.6" height="3.8"/><rect x="2827.2" y="1259.2" width="3.8" height="6.6"/><rect x="2855.4" y="1259.2" width="3.8" height="6.6"/></g></g>
<text x="2862.56" y="1265.70" font-size="27" fill="#2a2f40" textLength="272.78" lengthAdjust="spacingAndGlyphs">Гибкий лимит (4 sigm)</text>
<rect x="3165.7" y="1240" width="32" height="32" rx="8" fill="#0a84ff"/>
<text x="3201.16" y="1265.70" font-size="27" fill="#2a2f40" textLength="169.58" lengthAdjust="spacingAndGlyphs">Модель Linear</text>
<rect x="3404" y="1240" width="32" height="32" rx="8" fill="#ff1f2d"/>
<text x="3440.27" y="1265.70" font-size="27" fill="#2a2f40" textLength="125.42" lengthAdjust="spacingAndGlyphs">Стат. лим.</text>
<path d="M2562.00 886.85 L2572.62 953.30 L2591.92 889.46 L2615.09 893.37 L2641.15 876.43 L2678.80 893.37 L2729.96 905.09 L2757.96 912.26 L2775.33 901.18 L2828.42 901.18 L2852.56 890.76 L2902.75 890.76 L2924.95 869.91 L2954.88 869.91 L2965.50 843.86 L3026.31 843.86 L3104.50 834.74 L3267.63 827.57 L3347.75 816.50 L3527.30 806.07 L3527.30 911.61 L3045.62 970.23 L2949.09 984.57 L2804.29 1005.41 L2562.00 1024.95 Z" fill="#f7931e" fill-opacity="0.2"/>
<path d="M2562.00 1024.95 L2804.29 1005.41 L2949.09 984.57 L3045.62 970.23 L3527.30 911.61 L3527.30 1137.00 L2562.00 1137.00 Z" fill="#00a03c" fill-opacity="0.2"/>
<path d="M2562.00 744.84 L3527.30 744.84" fill="none" stroke="#ff1f2d" stroke-width="4.4" stroke-linecap="round" stroke-linejoin="round"/>
<path d="M2562.00 917.60 L3527.30 800.73" fill="none" stroke="#f7931e" stroke-width="4.2" stroke-linecap="butt" stroke-linejoin="round" stroke-dasharray="19.5 13"/>
<path d="M2562.00 1029.25 L2804.29 1008.80 L2949.09 985.74 L3045.62 971.28 L3527.30 912.26" fill="none" stroke="#0aa53a" stroke-width="4.2" stroke-linecap="butt" stroke-linejoin="round" stroke-dasharray="19.5 13"/>
<text x="96.25" y="1364.10" font-size="28.7" font-weight="bold" fill="#5c6480" textLength="187.35" lengthAdjust="spacingAndGlyphs">Загрязнения</text>
<g transform="translate(1170,1338)" fill="none" stroke="#8190a8" stroke-width="3.6" stroke-linecap="round"><path d="M1.8 9.5 V5.5 Q1.8 1.8 5.5 1.8 H9.5 M18.5 1.8 H22.5 Q26.2 1.8 26.2 5.5 V9.5 M1.8 18.5 V22.5 Q1.8 26.2 5.5 26.2 H9.5 M18.5 26.2 H22.5 Q26.2 26.2 26.2 22.5 V18.5"/></g>
<circle cx="111.9" cy="1400" r="12" fill="#fff" stroke="#0a84ff" stroke-width="8"/>
<text x="143.61" y="1410.10" font-size="27.7" fill="#232838" textLength="30.27" lengthAdjust="spacingAndGlyphs">Na</text>
<circle cx="223.9" cy="1400" r="15" fill="#f3f6fb" stroke="#c3d3ea" stroke-width="2"/>
<text x="255.51" y="1410.10" font-size="27.7" fill="#232838" textLength="21.46" lengthAdjust="spacingAndGlyphs">Si</text>
<circle cx="326" cy="1400" r="15" fill="#f3f6fb" stroke="#c3d3ea" stroke-width="2"/>
<text x="357.57" y="1410.10" font-size="27.7" fill="#232838" textLength="16.12" lengthAdjust="spacingAndGlyphs">K</text>
<clipPath id="ct4"><rect x="64" y="1431" width="1160" height="27.3"/></clipPath>
<g clip-path="url(#ct4)">
<text x="504.89" y="1457.90" font-size="24.4" fill="#5c6480" textLength="278.58" lengthAdjust="spacingAndGlyphs">Содержание натрия (Na)</text>
</g>
<path d="M170 1945.00 H1143.30 M170 1869.00 H1143.30 M170 1793.00 H1143.30 M170 1717.00 H1143.30 M170 1641.00 H1143.30 M170 1565.00 H1143.30 M170 1489.00 H1143.30 M178.00 1489 V1953 M371.06 1489 V1953 M564.12 1489 V1953 M757.18 1489 V1953 M950.24 1489 V1953 M1143.30 1489 V1953" stroke="#d5e1f1" stroke-width="2" fill="none"/>
<text x="152.81" y="1956.30" font-size="24.6" fill="#2a2f40" textLength="13.68" lengthAdjust="spacingAndGlyphs">0</text>
<text x="153.18" y="1880.30" font-size="24.6" fill="#2a2f40" textLength="13.68" lengthAdjust="spacingAndGlyphs">2</text>
<text x="152.69" y="1804.30" font-size="24.6" fill="#2a2f40" textLength="13.68" lengthAdjust="spacingAndGlyphs">4</text>
<text x="152.93" y="1728.30" font-size="24.6" fill="#2a2f40" textLength="13.68" lengthAdjust="spacingAndGlyphs">6</text>
<text x="152.93" y="1652.30" font-size="24.6" fill="#2a2f40" textLength="13.68" lengthAdjust="spacingAndGlyphs">8</text>
<text x="139.16" y="1576.30" font-size="24.6" fill="#2a2f40" textLength="27.36" lengthAdjust="spacingAndGlyphs">10</text>
<text x="139.52" y="1500.30" font-size="24.6" fill="#2a2f40" textLength="27.36" lengthAdjust="spacingAndGlyphs">12</text>
<text x="170.11" y="1984.30" font-size="24.6" fill="#2a2f40" textLength="13.68" lengthAdjust="spacingAndGlyphs">0</text>
<text x="349.40" y="1984.30" font-size="24.6" fill="#2a2f40" textLength="41.05" lengthAdjust="spacingAndGlyphs">200</text>
<text x="542.83" y="1984.30" font-size="24.6" fill="#2a2f40" textLength="41.05" lengthAdjust="spacingAndGlyphs">400</text>
<text x="735.52" y="1984.30" font-size="24.6" fill="#2a2f40" textLength="41.05" lengthAdjust="spacingAndGlyphs">600</text>
<text x="928.64" y="1984.30" font-size="24.6" fill="#2a2f40" textLength="41.05" lengthAdjust="spacingAndGlyphs">800</text>
<text x="1089.43" y="1984.30" font-size="24.6" fill="#2a2f40" textLength="54.73" lengthAdjust="spacingAndGlyphs">1000</text>
<text x="676.98" y="2032.20" font-size="24.4" fill="#5c6480" textLength="39.67" lengthAdjust="spacingAndGlyphs">м/ч</text>
<g transform="translate(106,1717.00) rotate(-90)">
<text x="-16.27" y="0.00" font-size="25.5" fill="#5c6480" textLength="31.01" lengthAdjust="spacingAndGlyphs">г/т</text>
</g>
<path d="M1171 1724.00 H1197 M1184 1711.00 V1737.00 M1171 1788.00 H1197" stroke="#8a97ae" stroke-width="3.8" stroke-linecap="round" fill="none"/>
<rect x="84.9" y="2050.2" width="27.6" height="27.6" rx="8" fill="#26c28b"/><g fill="#1a8aaa"><rect x="89.0" y="2048.0" width="6.6" height="3.8"/><rect x="89.0" y="2076.2" width="6.6" height="3.8"/><rect x="82.7" y="2054.3" width="3.8" height="6.6"/><rect x="110.9" y="2054.3" width="3.8" height="6.6"/><rect x="101.9" y="2048.0" width="6.6" height="3.8"/><rect x="101.9" y="2076.2" width="6.6" height="3.8"/><rect x="82.7" y="2067.2" width="3.8" height="6.6"/><rect x="110.9" y="2067.2" width="3.8" height="6.6"/></g>
<text x="118.07" y="2073.70" font-size="27" fill="#2a2f40" textLength="271.66" lengthAdjust="spacingAndGlyphs">Гибкий лимит (2 sigm)</text>
<g><rect x="422.4" y="2050.2" width="27.6" height="27.6" rx="8" fill="#fde8d3"/><g fill="#f7931e"><rect x="426.5" y="2048.0" width="6.6" height="3.8"/><rect x="426.5" y="2076.2" width="6.6" height="3.8"/><rect x="420.2" y="2054.3" width="3.8" height="6.6"/><rect x="448.4" y="2054.3" width="3.8" height="6.6"/><rect x="439.4" y="2048.0" width="6.6" height="3.8"/><rect x="439.4" y="2076.2" width="6.6" height="3.8"/><rect x="420.2" y="2067.2" width="3.8" height="6.6"/><rect x="448.4" y="2067.2" width="3.8" height="6.6"/></g></g>
<text x="456.57" y="2073.70" font-size="27" fill="#2a2f40" textLength="271.76" lengthAdjust="spacingAndGlyphs">Гибкий лимит (4 sigm)</text>
<rect x="758.7" y="2048" width="32" height="32" rx="8" fill="#0a84ff"/>
<text x="794.66" y="2073.70" font-size="27" fill="#2a2f40" textLength="217.43" lengthAdjust="spacingAndGlyphs">Модель Poynomial</text>
<rect x="1042.6" y="2048" width="32" height="32" rx="8" fill="#ff1f2d"/>
<text x="1078.76" y="2073.70" font-size="27" fill="#2a2f40" textLength="125.93" lengthAdjust="spacingAndGlyphs">Стат. лим.</text>
<path d="M178.00 1713.20 L192.96 1646.32 L225.11 1625.80 L234.76 1643.66 L277.43 1655.82 L299.63 1647.08 L337.27 1670.26 L399.05 1684.70 L419.32 1650.50 L711.81 1660.76 L760.08 1667.60 L773.59 1652.78 L897.15 1642.90 L1143.30 1618.20 L1143.30 1741.70 L648.10 1781.22 L178.00 1762.98 Z" fill="#f7931e" fill-opacity="0.2"/>
<path d="M178.00 1762.98 L648.10 1781.22 L1143.30 1741.70 L1143.30 1945.00 L178.00 1945.00 Z" fill="#00a03c" fill-opacity="0.2"/>
<path d="M178.00 1561.96 L1143.30 1561.96" fill="none" stroke="#ff1f2d" stroke-width="4.4" stroke-linecap="round" stroke-linejoin="round"/>
<path d="M178.00 1643.66 L711.81 1655.82 L1143.30 1615.16" fill="none" stroke="#f7931e" stroke-width="4.2" stroke-linecap="round" stroke-linejoin="round" stroke-dasharray="16 16.5"/>
<path d="M178.00 1757.66 L648.10 1777.80 L1143.30 1732.96" fill="none" stroke="#0aa53a" stroke-width="4.2" stroke-linecap="round" stroke-linejoin="round" stroke-dasharray="16 16.5"/>
<text x="1288.27" y="1364.10" font-size="28.7" font-weight="bold" fill="#5c6480" textLength="294.68" lengthAdjust="spacingAndGlyphs">Элементы присадок</text>
<g transform="translate(2362,1338)" fill="none" stroke="#8190a8" stroke-width="3.6" stroke-linecap="round"><path d="M1.8 9.5 V5.5 Q1.8 1.8 5.5 1.8 H9.5 M18.5 1.8 H22.5 Q26.2 1.8 26.2 5.5 V9.5 M1.8 18.5 V22.5 Q1.8 26.2 5.5 26.2 H9.5 M18.5 26.2 H22.5 Q26.2 26.2 26.2 22.5 V18.5"/></g>
<circle cx="1303.9" cy="1400" r="15" fill="#f3f6fb" stroke="#c3d3ea" stroke-width="2"/>
<text x="1335.42" y="1410.10" font-size="27.7" fill="#232838" textLength="30.21" lengthAdjust="spacingAndGlyphs">Zn</text>
<circle cx="1414" cy="1400" r="12" fill="#fff" stroke="#0a84ff" stroke-width="8"/>
<text x="1445.19" y="1410.10" font-size="27.7" fill="#232838" textLength="15.96" lengthAdjust="spacingAndGlyphs">P</text>
<circle cx="1509.9" cy="1400" r="15" fill="#f3f6fb" stroke="#c3d3ea" stroke-width="2"/>
<text x="1541.36" y="1410.10" font-size="27.7" fill="#232838" textLength="29.12" lengthAdjust="spacingAndGlyphs">Ca</text>
<circle cx="1619.9" cy="1400" r="15" fill="#f3f6fb" stroke="#c3d3ea" stroke-width="2"/>
<text x="1651.32" y="1410.10" font-size="27.7" fill="#232838" textLength="28.76" lengthAdjust="spacingAndGlyphs">Ba</text>
<circle cx="1729.9" cy="1400" r="15" fill="#f3f6fb" stroke="#c3d3ea" stroke-width="2"/>
<text x="1761.14" y="1410.10" font-size="27.7" fill="#232838" textLength="35.82" lengthAdjust="spacingAndGlyphs">Mg</text>
<clipPath id="ct5"><rect x="1256" y="1431" width="1160" height="27.3"/></clipPath>
<g clip-path="url(#ct5)">
<text x="1619.82" y="1457.90" font-size="24.4" fill="#5c6480" textLength="431.96" lengthAdjust="spacingAndGlyphs">Продукты сульфатирования (Sulfation)</text>
</g>
<path d="M1362 1945.00 H2335.30 M1362 1869.00 H2335.30 M1362 1793.00 H2335.30 M1362 1717.00 H2335.30 M1362 1641.00 H2335.30 M1362 1565.00 H2335.30 M1362 1489.00 H2335.30 M1370.00 1489 V1953 M1563.06 1489 V1953 M1756.12 1489 V1953 M1949.18 1489 V1953 M2142.24 1489 V1953 M2335.30 1489 V1953" stroke="#d5e1f1" stroke-width="2" fill="none"/>
<text x="1344.81" y="1956.30" font-size="24.6" fill="#2a2f40" textLength="13.68" lengthAdjust="spacingAndGlyphs">0</text>
<text x="1344.93" y="1880.30" font-size="24.6" fill="#2a2f40" textLength="13.68" lengthAdjust="spacingAndGlyphs">5</text>
<text x="1331.15" y="1804.30" font-size="24.6" fill="#2a2f40" textLength="27.36" lengthAdjust="spacingAndGlyphs">10</text>
<text x="1331.28" y="1728.30" font-size="24.6" fill="#2a2f40" textLength="27.36" lengthAdjust="spacingAndGlyphs">15</text>
<text x="1331.15" y="1652.30" font-size="24.6" fill="#2a2f40" textLength="27.36" lengthAdjust="spacingAndGlyphs">20</text>
<text x="1331.28" y="1576.30" font-size="24.6" fill="#2a2f40" textLength="27.36" lengthAdjust="spacingAndGlyphs">25</text>
<text x="1331.15" y="1500.30" font-size="24.6" fill="#2a2f40" textLength="27.36" lengthAdjust="spacingAndGlyphs">30</text>
<text x="1362.11" y="1984.30" font-size="24.6" fill="#2a2f40" textLength="13.68" lengthAdjust="spacingAndGlyphs">0</text>
<text x="1541.40" y="1984.30" font-size="24.6" fill="#2a2f40" textLength="41.05" lengthAdjust="spacingAndGlyphs">200</text>
<text x="1734.83" y="1984.30" font-size="24.6" fill="#2a2f40" textLength="41.05" lengthAdjust="spacingAndGlyphs">400</text>
<text x="1927.52" y="1984.30" font-size="24.6" fill="#2a2f40" textLength="41.05" lengthAdjust="spacingAndGlyphs">600</text>
<text x="2120.64" y="1984.30" font-size="24.6" fill="#2a2f40" textLength="41.05" lengthAdjust="spacingAndGlyphs">800</text>
<text x="2281.43" y="1984.30" font-size="24.6" fill="#2a2f40" textLength="54.73" lengthAdjust="spacingAndGlyphs">1000</text>
<text x="1868.98" y="2032.20" font-size="24.4" fill="#5c6480" textLength="39.67" lengthAdjust="spacingAndGlyphs">м/ч</text>
<g transform="translate(1298,1717.00) rotate(-90)">
<text x="-16.27" y="0.00" font-size="25.5" fill="#5c6480" textLength="31.01" lengthAdjust="spacingAndGlyphs">г/т</text>
</g>
<path d="M2363 1724.00 H2389 M2376 1711.00 V1737.00 M2363 1788.00 H2389" stroke="#8a97ae" stroke-width="3.8" stroke-linecap="round" fill="none"/>
<rect x="1372.3" y="2050.2" width="27.6" height="27.6" rx="8" fill="#26c28b"/><g fill="#1a8aaa"><rect x="1376.4" y="2048.0" width="6.6" height="3.8"/><rect x="1376.4" y="2076.2" width="6.6" height="3.8"/><rect x="1370.1" y="2054.3" width="3.8" height="6.6"/><rect x="1398.3" y="2054.3" width="3.8" height="6.6"/><rect x="1389.3" y="2048.0" width="6.6" height="3.8"/><rect x="1389.3" y="2076.2" width="6.6" height="3.8"/><rect x="1370.1" y="2067.2" width="3.8" height="6.6"/><rect x="1398.3" y="2067.2" width="3.8" height="6.6"/></g>
<text x="1406.57" y="2073.70" font-size="27" fill="#2a2f40" textLength="271.66" lengthAdjust="spacingAndGlyphs">Гибкий лимит (2 sigm)</text>
<g><rect x="1710.8" y="2050.2" width="27.6" height="27.6" rx="8" fill="#fde8d3"/><g fill="#f7931e"><rect x="1714.9" y="2048.0" width="6.6" height="3.8"/><rect x="1714.9" y="2076.2" width="6.6" height="3.8"/><rect x="1708.6" y="2054.3" width="3.8" height="6.6"/><rect x="1736.8" y="2054.3" width="3.8" height="6.6"/><rect x="1727.8" y="2048.0" width="6.6" height="3.8"/><rect x="1727.8" y="2076.2" width="6.6" height="3.8"/><rect x="1708.6" y="2067.2" width="3.8" height="6.6"/><rect x="1736.8" y="2067.2" width="3.8" height="6.6"/></g></g>
<text x="1743.96" y="2073.70" font-size="27" fill="#2a2f40" textLength="272.78" lengthAdjust="spacingAndGlyphs">Гибкий лимит (4 sigm)</text>
<rect x="2046" y="2048" width="32" height="32" rx="8" fill="#0a84ff"/>
<text x="2081.46" y="2073.70" font-size="27" fill="#2a2f40" textLength="218.04" lengthAdjust="spacingAndGlyphs">Модель Poynomial</text>
<path d="M1370.00 1512.56 L1402.43 1528.06 L1432.45 1505.72 L1460.35 1520.31 L1493.46 1512.56 L1526.57 1525.02 L1548.29 1535.36 L1616.44 1528.52 L1741.54 1535.36 L1780.83 1551.32 L1818.19 1551.32 L1848.21 1543.72 L2335.30 1574.12 L2335.30 1650.42 L1950.15 1629.60 L1862.59 1625.50 L1756.12 1609.38 L1673.39 1600.57 L1621.65 1597.53 L1562.77 1600.57 L1474.83 1621.39 L1370.00 1650.27 Z" fill="#f7931e" fill-opacity="0.2"/>
<path d="M1370.00 1650.27 L1474.83 1621.39 L1562.77 1600.57 L1621.65 1597.53 L1673.39 1600.57 L1756.12 1609.38 L1862.59 1625.50 L1950.15 1629.60 L2335.30 1650.42 L2335.30 1945.00 L1370.00 1945.00 Z" fill="#00a03c" fill-opacity="0.2"/>
<path d="M1370.00 1519.86 L1562.77 1529.13 L1756.12 1539.46 L1862.59 1546.76 L1950.15 1552.23 L2142.24 1565.61 L2335.30 1579.14" fill="none" stroke="#f7931e" stroke-width="4.2" stroke-linecap="round" stroke-linejoin="round" stroke-dasharray="16 16.5"/>
<path d="M1370.00 1649.21 L1474.83 1613.03 L1474.83 1613.03 C1485.87 1610.95 1516.69 1603.81 1541.05 1600.57 C1565.41 1597.33 1585.13 1593.22 1620.98 1593.58 C1656.82 1593.93 1701.26 1598.72 1756.12 1602.70 C1810.98 1606.67 1853.62 1609.74 1950.15 1617.44 C2046.68 1625.14 2271.11 1643.66 2335.30 1648.90" fill="none" stroke="#24a02e" stroke-width="4.2" stroke-linecap="round" stroke-linejoin="round" stroke-dasharray="16 16.5"/>
<path d="M1370.00 1745.58 L1474.83 1709.40 L1474.83 1709.40 C1489.49 1706.79 1536.00 1697.04 1562.77 1693.74 C1589.54 1690.45 1603.23 1688.78 1635.46 1689.64 C1667.68 1690.50 1703.67 1694.73 1756.12 1698.91 C1808.57 1703.09 1885.79 1709.60 1950.15 1714.72 C2014.50 1719.84 2079.33 1724.68 2142.24 1729.62 C2205.15 1734.56 2296.69 1741.90 2327.58 1744.36" fill="none" stroke="#0a84ff" stroke-width="4.4" stroke-linecap="round" stroke-linejoin="round"/>
<text x="2480.71" y="1364.10" font-size="28.7" font-weight="bold" fill="#5c6480" textLength="231.87" lengthAdjust="spacingAndGlyphs">Дополнительно</text>
<g transform="translate(3554,1338)" fill="none" stroke="#8190a8" stroke-width="3.6" stroke-linecap="round"><path d="M1.8 9.5 V5.5 Q1.8 1.8 5.5 1.8 H9.5 M18.5 1.8 H22.5 Q26.2 1.8 26.2 5.5 V9.5 M1.8 18.5 V22.5 Q1.8 26.2 5.5 26.2 H9.5 M18.5 26.2 H22.5 Q26.2 26.2 26.2 22.5 V18.5"/></g>
<circle cx="2495.9" cy="1400" r="15" fill="#f3f6fb" stroke="#c3d3ea" stroke-width="2"/>
<text x="2526.85" y="1410.10" font-size="27.7" fill="#232838" textLength="100.06" lengthAdjust="spacingAndGlyphs">Nitration</text>
<circle cx="2675.8" cy="1400" r="12" fill="#fff" stroke="#0a84ff" stroke-width="8"/>
<text x="2707.32" y="1410.10" font-size="27.7" fill="#232838" textLength="101.82" lengthAdjust="spacingAndGlyphs">Sulfation</text>
<circle cx="2857.6" cy="1400" r="15" fill="#f3f6fb" stroke="#c3d3ea" stroke-width="2"/>
<text x="2889.13" y="1410.10" font-size="27.7" fill="#232838" textLength="110.16" lengthAdjust="spacingAndGlyphs">Oxidation</text>
<circle cx="3047.8" cy="1400" r="15" fill="#f3f6fb" stroke="#c3d3ea" stroke-width="2"/>
<text x="3078.44" y="1410.10" font-size="27.7" fill="#232838" textLength="50.15" lengthAdjust="spacingAndGlyphs">Fuel</text>
<circle cx="3176" cy="1400" r="15" fill="#f3f6fb" stroke="#c3d3ea" stroke-width="2"/>
<text x="3207.77" y="1410.10" font-size="27.7" fill="#232838" textLength="69.16" lengthAdjust="spacingAndGlyphs">Water</text>
<circle cx="3326.2" cy="1400" r="15" fill="#f3f6fb" stroke="#c3d3ea" stroke-width="2"/>
<text x="3356.93" y="1410.10" font-size="27.7" fill="#232838" textLength="70.29" lengthAdjust="spacingAndGlyphs">Glycol</text>
<clipPath id="ct6"><rect x="2448" y="1431" width="1160" height="27.3"/></clipPath>
<g clip-path="url(#ct6)">
<text x="2811.82" y="1457.90" font-size="24.4" fill="#5c6480" textLength="431.96" lengthAdjust="spacingAndGlyphs">Продукты сульфатирования (Sulfation)</text>
</g>
<path d="M2554 1945.00 H3527.30 M2554 1869.00 H3527.30 M2554 1793.00 H3527.30 M2554 1717.00 H3527.30 M2554 1641.00 H3527.30 M2554 1565.00 H3527.30 M2554 1489.00 H3527.30 M2562.00 1489 V1953 M2755.06 1489 V1953 M2948.12 1489 V1953 M3141.18 1489 V1953 M3334.24 1489 V1953 M3527.30 1489 V1953" stroke="#d5e1f1" stroke-width="2" fill="none"/>
<text x="2536.81" y="1956.30" font-size="24.6" fill="#2a2f40" textLength="13.68" lengthAdjust="spacingAndGlyphs">0</text>
<text x="2536.93" y="1880.30" font-size="24.6" fill="#2a2f40" textLength="13.68" lengthAdjust="spacingAndGlyphs">5</text>
<text x="2523.16" y="1804.30" font-size="24.6" fill="#2a2f40" textLength="27.36" lengthAdjust="spacingAndGlyphs">10</text>
<text x="2523.28" y="1728.30" font-size="24.6" fill="#2a2f40" textLength="27.36" lengthAdjust="spacingAndGlyphs">15</text>
<text x="2523.15" y="1652.30" font-size="24.6" fill="#2a2f40" textLength="27.36" lengthAdjust="spacingAndGlyphs">20</text>
<text x="2523.28" y="1576.30" font-size="24.6" fill="#2a2f40" textLength="27.36" lengthAdjust="spacingAndGlyphs">25</text>
<text x="2523.16" y="1500.30" font-size="24.6" fill="#2a2f40" textLength="27.36" lengthAdjust="spacingAndGlyphs">30</text>
<text x="2554.11" y="1984.30" font-size="24.6" fill="#2a2f40" textLength="13.68" lengthAdjust="spacingAndGlyphs">0</text>
<text x="2733.40" y="1984.30" font-size="24.6" fill="#2a2f40" textLength="41.05" lengthAdjust="spacingAndGlyphs">200</text>
<text x="2926.82" y="1984.30" font-size="24.6" fill="#2a2f40" textLength="41.05" lengthAdjust="spacingAndGlyphs">400</text>
<text x="3119.52" y="1984.30" font-size="24.6" fill="#2a2f40" textLength="41.05" lengthAdjust="spacingAndGlyphs">600</text>
<text x="3312.64" y="1984.30" font-size="24.6" fill="#2a2f40" textLength="41.05" lengthAdjust="spacingAndGlyphs">800</text>
<text x="3473.43" y="1984.30" font-size="24.6" fill="#2a2f40" textLength="54.73" lengthAdjust="spacingAndGlyphs">1000</text>
<text x="3060.98" y="2032.20" font-size="24.4" fill="#5c6480" textLength="39.67" lengthAdjust="spacingAndGlyphs">м/ч</text>
<g transform="translate(2490,1717.00) rotate(-90)">
<text x="-16.27" y="0.00" font-size="25.5" fill="#5c6480" textLength="31.01" lengthAdjust="spacingAndGlyphs">г/т</text>
</g>
<path d="M3555 1724.00 H3581 M3568 1711.00 V1737.00 M3555 1788.00 H3581" stroke="#8a97ae" stroke-width="3.8" stroke-linecap="round" fill="none"/>
<rect x="2564.2999999999997" y="2050.2" width="27.6" height="27.6" rx="8" fill="#26c28b"/><g fill="#1a8aaa"><rect x="2568.4" y="2048.0" width="6.6" height="3.8"/><rect x="2568.4" y="2076.2" width="6.6" height="3.8"/><rect x="2562.1" y="2054.3" width="3.8" height="6.6"/><rect x="2590.3" y="2054.3" width="3.8" height="6.6"/><rect x="2581.3" y="2048.0" width="6.6" height="3.8"/><rect x="2581.3" y="2076.2" width="6.6" height="3.8"/><rect x="2562.1" y="2067.2" width="3.8" height="6.6"/><rect x="2590.3" y="2067.2" width="3.8" height="6.6"/></g>
<text x="2598.57" y="2073.70" font-size="27" fill="#2a2f40" textLength="271.66" lengthAdjust="spacingAndGlyphs">Гибкий лимит (2 sigm)</text>
<g><rect x="2902.7999999999997" y="2050.2" width="27.6" height="27.6" rx="8" fill="#fde8d3"/><g fill="#f7931e"><rect x="2906.9" y="2048.0" width="6.6" height="3.8"/><rect x="2906.9" y="2076.2" width="6.6" height="3.8"/><rect x="2900.6" y="2054.3" width="3.8" height="6.6"/><rect x="2928.8" y="2054.3" width="3.8" height="6.6"/><rect x="2919.8" y="2048.0" width="6.6" height="3.8"/><rect x="2919.8" y="2076.2" width="6.6" height="3.8"/><rect x="2900.6" y="2067.2" width="3.8" height="6.6"/><rect x="2928.8" y="2067.2" width="3.8" height="6.6"/></g></g>
<text x="2935.96" y="2073.70" font-size="27" fill="#2a2f40" textLength="272.78" lengthAdjust="spacingAndGlyphs">Гибкий лимит (4 sigm)</text>
<rect x="3238" y="2048" width="32" height="32" rx="8" fill="#0a84ff"/>
<text x="3273.46" y="2073.70" font-size="27" fill="#2a2f40" textLength="218.04" lengthAdjust="spacingAndGlyphs">Модель Poynomial</text>
<path d="M2562.00 1512.56 L2594.43 1528.06 L2624.45 1505.72 L2652.35 1520.31 L2685.46 1512.56 L2718.57 1525.02 L2740.29 1535.36 L2808.44 1528.52 L2933.54 1535.36 L2972.83 1551.32 L3010.19 1551.32 L3040.21 1543.72 L3527.30 1574.12 L3527.30 1650.42 L3142.15 1629.60 L3054.59 1625.50 L2948.12 1609.38 L2865.39 1600.57 L2813.65 1597.53 L2754.77 1600.57 L2666.83 1621.39 L2562.00 1650.27 Z" fill="#f7931e" fill-opacity="0.2"/>
<path d="M2562.00 1650.27 L2666.83 1621.39 L2754.77 1600.57 L2813.65 1597.53 L2865.39 1600.57 L2948.12 1609.38 L3054.59 1625.50 L3142.15 1629.60 L3527.30 1650.42 L3527.30 1945.00 L2562.00 1945.00 Z" fill="#00a03c" fill-opacity="0.2"/>
<path d="M2562.00 1519.86 L2754.77 1529.13 L2948.12 1539.46 L3054.59 1546.76 L3142.15 1552.23 L3334.24 1565.61 L3527.30 1579.14" fill="none" stroke="#f7931e" stroke-width="4.2" stroke-linecap="round" stroke-linejoin="round" stroke-dasharray="16 16.5"/>
<path d="M2562.00 1649.21 L2666.83 1613.03 L2666.83 1613.03 C2677.87 1610.95 2708.69 1603.81 2733.05 1600.57 C2757.41 1597.33 2777.13 1593.22 2812.98 1593.58 C2848.82 1593.93 2893.26 1598.72 2948.12 1602.70 C3002.98 1606.67 3045.62 1609.74 3142.15 1617.44 C3238.68 1625.14 3463.11 1643.66 3527.30 1648.90" fill="none" stroke="#24a02e" stroke-width="4.2" stroke-linecap="round" stroke-linejoin="round" stroke-dasharray="16 16.5"/>
<path d="M2562.00 1745.58 L2666.83 1709.40 L2666.83 1709.40 C2681.49 1706.79 2728.00 1697.04 2754.77 1693.74 C2781.54 1690.45 2795.23 1688.78 2827.46 1689.64 C2859.68 1690.50 2895.67 1694.73 2948.12 1698.91 C3000.57 1703.09 3077.79 1709.60 3142.15 1714.72 C3206.50 1719.84 3271.33 1724.68 3334.24 1729.62 C3397.15 1734.56 3488.69 1741.90 3519.58 1744.36" fill="none" stroke="#0a84ff" stroke-width="4.4" stroke-linecap="round" stroke-linejoin="round"/>
</svg>
</body></html>
